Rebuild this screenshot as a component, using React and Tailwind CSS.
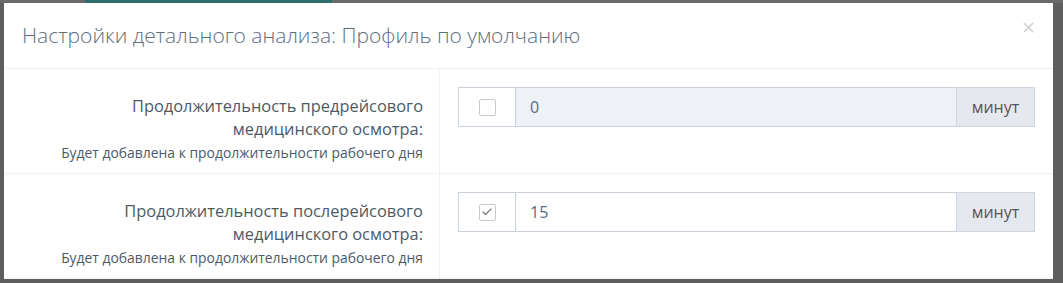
import { Check, X } from "lucide-react";

const rows = [
    { title: ["Продолжительность предрейсового", "медицинского осмотра:"], value: "0", checked: false },
    { title: ["Продолжительность послерейсового", "медицинского осмотра:"], value: "15", checked: true }
];

const Row = ({ title, value, checked }) => {
    return (
        <div className="flex h-[105px] border-b border-[#eef1f5]">
            <div className="w-[436px] shrink-0 border-r border-[#eef1f5] pr-[16px] pt-[25px] text-right">
                <div className="text-[16.4px] leading-[23px] text-[#4c5a68]">{title[0]}</div>
                <div className="text-[16.4px] leading-[23px] text-[#4c5a68]">{title[1]}</div>
                <div className="text-[13.9px] leading-[22px] text-[#4c5a68] mt-[2px]">Будет добавлена к продолжительности рабочего дня</div>
            </div>
            <div className="flex-1 pl-[18px] pr-[18px] pt-[18px]">
                <div className="flex h-[40px]">
                    <div className="w-[58px] flex items-center justify-center border border-[#c9d1dd] bg-white">
                        <span className="w-[17px] h-[17px] border border-[#c8c8c8] rounded-[2px] bg-white flex items-center justify-center">
                            {checked && <Check size={12} strokeWidth={3} className="text-[#888]" />}
                        </span>
                    </div>
                    <div className={`flex-1 flex items-center pl-[14px] border-y border-[#c9d1dd] text-[16px] text-[#536d8a] ${checked ? "bg-white" : "bg-[#eef1f6]"}`}>
                        {value}
                    </div>
                    <div className="w-[79px] flex items-center justify-center border border-[#d0d6df] bg-[#e5e9ef] text-[16px] text-[#555]">
                        минут
                    </div>
                </div>
            </div>
        </div>
    );
};

export default function App() {
    return (
        <div className="w-[1063px] h-[283px] overflow-hidden bg-[#5e5e5e] relative" style={{ fontFamily: "'Open Sans', sans-serif" }}>
            <div className="h-[3px] flex">
                <div className="w-[85px] bg-[#6a6a6a]" />
                <div className="w-[247px] bg-[#2d6f6c]" />
                <div className="flex-1 bg-[#6a6a6a]" />
            </div>
            <div className="ml-[4px] w-[1049px] bg-white">
                <div className="flex items-center justify-between h-[66px] pl-[18px] pr-[16px] border-b border-[#eef1f5]">
                    <h4 className="text-[21px] text-[#5d6e80] font-light">Настройки детального анализа: Профиль по умолчанию</h4>
                    <X size={17} strokeWidth={2.2} className="text-[#cfcfcf] -mt-[16px]" />
                </div>
                {rows.map((row, i) => (
                    <Row key={i} {...row} />
                ))}
            </div>
        </div>
    );
}
